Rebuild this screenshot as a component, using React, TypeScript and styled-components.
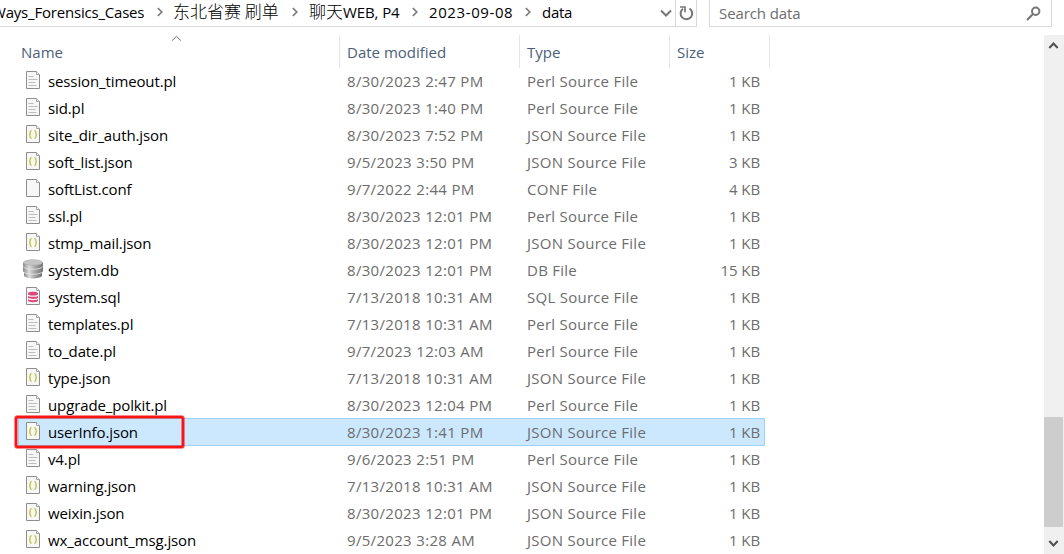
import React from "react";
import styled, { createGlobalStyle } from "styled-components";

const Global = createGlobalStyle`
  *, *::before { box-sizing: border-box; }
  body {
    margin: 0;
    background: #fff;
    overflow: hidden;
    font-family: "Open Sans", "Noto Sans", "Noto Sans CJK SC", sans-serif;
    font-size: 15px;
    color: #000;
  }
`;

const Window = styled.div`
  width: 1064px;
  height: 554px;
  display: flex;
  flex-direction: column;
  overflow: hidden;
  white-space: nowrap;
`;

const TopBar = styled.div`
  height: 27px;
  display: flex;
  flex: none;
`;

const AddressBar = styled.div`
  width: 697px;
  display: flex;
  border-right: 1px solid #d9d9d9;
  border-bottom: 1px solid #d9d9d9;
`;

const Crumbs = styled.div`
  width: 656px;
  display: flex;
  align-items: center;
`;

const Crumb = styled.span<{ $w: number; $track?: number; $shift?: number }>`
  width: ${(p) => p.$w}px;
  margin-left: ${(p) => p.$shift ?? 0}px;
  letter-spacing: ${(p) => p.$track ?? 0}px;
  height: 26px;
  line-height: 25px;
  flex: none;
`;

const Han = styled.span`
  font-family: "Noto Sans CJK SC", sans-serif;
  font-size: 17px;
  font-weight: 300;
  line-height: 1;
  letter-spacing: 0;
`;

const Separator = styled.svg`
  width: 8px;
  height: 10px;
  flex: none;
  margin-right: 12px;
  margin-top: -2px;
`;

const DropButton = styled.div`
  width: 19px;
  height: 26px;
  display: flex;
  align-items: center;
  justify-content: center;
`;

const RefreshButton = styled.div`
  width: 21px;
  height: 26px;
  border-left: 1px solid #d9d9d9;
  display: flex;
  align-items: center;
  justify-content: center;
`;

const SearchBox = styled.div`
  width: 343px;
  margin-left: 12px;
  padding: 0 10px 0 9px;
  border: 1px solid #d9d9d9;
  border-top: 0;
  display: flex;
  align-items: center;
  justify-content: space-between;
  color: #6d6d6d;
  line-height: 26px;
  letter-spacing: -0.1px;
`;

const Main = styled.div`
  display: flex;
  flex: 1;
  padding-top: 8px;
  min-height: 0;
`;

const List = styled.div`
  width: 1044px;
`;

const Header = styled.div`
  display: flex;
  height: 33px;
  color: #4c607a;
`;

const HeaderCell = styled.div<{ $w: number; $pad: number }>`
  position: relative;
  width: ${(p) => p.$w}px;
  padding-left: ${(p) => p.$pad}px;
  border-right: 1px solid #e5e5e5;
  line-height: 35px;
`;

const SortMark = styled.svg`
  position: absolute;
  left: 171px;
  top: 0;
`;

const Row = styled.div<{ $selected?: boolean }>`
  position: relative;
  display: flex;
  height: 27px;
  line-height: 27px;
  ${(p) =>
    p.$selected &&
    `&::before {
      content: "";
      position: absolute;
      z-index: -1;
      left: 18px;
      top: -1px;
      width: 747px;
      height: 28px;
      background: #cce8ff;
      border: 1px solid #99d1ff;
    }`}
`;

const NameCell = styled.div`
  width: 347px;
  padding-left: 23px;
  display: flex;
`;

const IconSlot = styled.div`
  width: 25px;
  height: 24px;
  display: flex;
  align-items: center;
`;

const FileName = styled.span`
  letter-spacing: -0.12px;
`;

const DateCell = styled.div`
  width: 180px;
  color: #6d6d6d;
  letter-spacing: 0.32px;
`;

const TypeCell = styled.div`
  width: 133px;
  color: #6d6d6d;
  letter-spacing: 0.26px;
`;

const SizeCell = styled.div`
  width: 100px;
  color: #6d6d6d;
  text-align: right;
  letter-spacing: -0.1px;
`;

const Highlight = styled.div`
  position: absolute;
  left: 15px;
  top: -3px;
  width: 169px;
  height: 32px;
  border: 2px solid #fb1414;
  border-radius: 2px;
  box-shadow: 0 0 0 0.5px #fb1414, inset 0 0 0 0.5px #fb1414;
`;

const ScrollBar = styled.div`
  width: 20px;
  background: #f0f0f0;
  display: flex;
  flex-direction: column;
`;

const ScrollArrow = styled.svg`
  width: 20px;
  height: 20px;
  flex: none;
`;

const ScrollThumb = styled.div`
  width: 19px;
  height: 110px;
  margin: 362px 0 auto;
  background: #cdcdcd;
  flex: none;
`;

type Kind = "text" | "json" | "blank" | "db" | "sql";

function FileIcon({ kind }: { kind: Kind }) {
  if (kind === "db") {
    return (
      <svg width="20" height="20" viewBox="0 0 20 20">
        <defs>
          <linearGradient id="metal">
            <stop offset="0" stopColor="#8a8a8a" />
            <stop offset=".3" stopColor="#dcdcdc" />
            <stop offset=".6" stopColor="#a6a6a6" />
            <stop offset="1" stopColor="#737373" />
          </linearGradient>
        </defs>
        <path d="M1 13v4c2 3.300 16 3.300 18 0v-4z" fill="url(#metal)" />
        <path d="M0 8v4.500c2 3.300 18 3.300 20 0V8z" fill="url(#metal)" />
        <path d="M.5 12.800c2 3.300 17 3.300 19 0" fill="none" stroke="#e4e4e4" strokeWidth=".8" />
        <path d="M0 3.500v4c2 3.300 18 3.300 20 0v-4z" fill="url(#metal)" />
        <path d="M.5 7.800c2 3.300 17 3.300 19 0" fill="none" stroke="#e4e4e4" strokeWidth=".8" />
        <ellipse cx="10" cy="3.500" rx="9.600" ry="2.800" fill="#c4c4c4" stroke="#aaa" strokeWidth=".6" />
      </svg>
    );
  }
  return (
    <svg width="20" height="20" viewBox="0 0 20 20">
      <path d="M3.500 1.500h10l3 3v14h-13z" fill="#f6f7f6" stroke="#8e8e8e" />
      <path d="M13.500 1.500v3h3" fill="#fff" stroke="#9c9c9c" strokeWidth=".9" />
      {kind === "text" && (
        <path d="M5.500 6.500h5M5.500 9.500h9M5.500 12.500h7M5.500 15.500h8" stroke="#bdbdbd" />
      )}
      {kind === "json" && (
        <path
          d="M8.700 6.700c-1.500 0-1.500.5-1.500 2 0 1.300-.2 1.800-1.200 1.800 1 0 1.200.5 1.200 1.800 0 1.500 0 2 1.500 2M11.300 6.700c1.500 0 1.500.5 1.500 2 0 1.300.2 1.800 1.200 1.800-1 0-1.200.5-1.200 1.800 0 1.500 0 2-1.500 2"
          fill="none"
          stroke="#c6c84f"
          strokeWidth="1.500"
        />
      )}
      {kind === "sql" && (
        <g fill="#e0457b">
          <path d="M5 7.300c0-2 10-2 10 0v1c0 1.600-10 1.600-10 0z" />
          <path d="M5 9.900c2 1.200 8 1.200 10 0v1.800c0 1.600-10 1.600-10 0z" />
          <path d="M5 13.300c2 1.200 8 1.200 10 0v1.500c0 1.900-10 1.900-10 0z" />
        </g>
      )}
    </svg>
  );
}

type Entry = [name: string, date: string, type: string, icon: Kind, size: string];

const files: Entry[] = [
  ["session_timeout.pl", "8/30/2023 2:47 PM", "Perl Source File", "text", "1 KB"],
  ["sid.pl", "8/30/2023 1:40 PM", "Perl Source File", "text", "1 KB"],
  ["site_dir_auth.json", "8/30/2023 7:52 PM", "JSON Source File", "json", "1 KB"],
  ["soft_list.json", "9/5/2023 3:50 PM", "JSON Source File", "json", "3 KB"],
  ["softList.conf", "9/7/2022 2:44 PM", "CONF File", "blank", "4 KB"],
  ["ssl.pl", "8/30/2023 12:01 PM", "Perl Source File", "text", "1 KB"],
  ["stmp_mail.json", "8/30/2023 12:01 PM", "JSON Source File", "json", "1 KB"],
  ["system.db", "8/30/2023 12:01 PM", "DB File", "db", "15 KB"],
  ["system.sql", "7/13/2018 10:31 AM", "SQL Source File", "sql", "1 KB"],
  ["templates.pl", "7/13/2018 10:31 AM", "Perl Source File", "text", "1 KB"],
  ["to_date.pl", "9/7/2023 12:03 AM", "Perl Source File", "text", "1 KB"],
  ["type.json", "7/13/2018 10:31 AM", "JSON Source File", "json", "1 KB"],
  ["upgrade_polkit.pl", "8/30/2023 12:04 PM", "Perl Source File", "text", "1 KB"],
  ["userInfo.json", "8/30/2023 1:41 PM", "JSON Source File", "json", "1 KB"],
  ["v4.pl", "9/6/2023 2:51 PM", "Perl Source File", "text", "1 KB"],
  ["warning.json", "7/13/2018 10:31 AM", "JSON Source File", "json", "1 KB"],
  ["weixin.json", "8/30/2023 12:01 PM", "JSON Source File", "json", "1 KB"],
  ["wx_account_msg.json", "9/5/2023 3:28 AM", "JSON Source File", "json", "1 KB"],
];

const Chevron = () => (
  <Separator viewBox="0 0 8 10">
    <path d="M1.800 1l4 4-4 4" fill="none" stroke="#7a7a7a" strokeWidth="1.700" />
  </Separator>
);

export default function App() {
  return (
    <Window>
      <Global />
      <TopBar>
        <AddressBar>
          <Crumbs>
            <Crumb $shift={-8} $w={164} $track={-0.2}>Ways_Forensics_Cases</Crumb>
            <Chevron />
            <Crumb $w={118} $shift={-3}><Han>东北省赛 刷单</Han></Crumb>
            <Chevron />
            <Crumb $w={102} $shift={-2} $track={-0.1}><Han>聊天</Han>WEB, P4</Crumb>
            <Chevron />
            <Crumb $w={95} $shift={-2} $track={0.6}>2023-09-08</Crumb>
            <Chevron />
            <Crumb $w={40} $shift={-2} $track={-0.3}>data</Crumb>
          </Crumbs>
          <DropButton>
            <svg width="12" height="8" viewBox="0 0 12 8">
              <path d="M1 1.500l5 5 5-5" fill="none" stroke="#767676" strokeWidth="2" />
            </svg>
          </DropButton>
          <RefreshButton>
            <svg width="16" height="16" viewBox="0 0 16 16">
              <path d="M11.500 3.500a5.800 5.800 0 1 1-6.500.2" fill="none" stroke="#767676" strokeWidth="2" />
              <path d="M2 2h5v5.200" fill="none" stroke="#767676" strokeWidth="1.700" />
            </svg>
          </RefreshButton>
        </AddressBar>
        <SearchBox>
          Search data
          <svg width="15" height="15" viewBox="0 0 15 15">
            <circle cx="9.700" cy="5.200" r="3.700" fill="none" stroke="#767676" strokeWidth="2" />
            <path d="M7 8l-6 6" stroke="#767676" strokeWidth="2.200" />
          </svg>
        </SearchBox>
      </TopBar>
      <Main>
        <List>
          <Header>
            <HeaderCell $w={340} $pad={21}>
              Name
              <SortMark width="11" height="7" viewBox="0 0 11 7">
                <path d="M1 5.700l4.500-4.400L10 5.700" fill="none" stroke="#6b6b6b" />
              </SortMark>
            </HeaderCell>
            <HeaderCell $w={180} $pad={7}>Date modified</HeaderCell>
            <HeaderCell $w={150} $pad={7}>Type</HeaderCell>
            <HeaderCell $w={100} $pad={7}>Size</HeaderCell>
          </Header>
          {files.map(([name, date, type, icon, size]) => {
            const selected = name === "userInfo.json";
            return (
              <Row key={name} $selected={selected}>
                <NameCell>
                  <IconSlot>
                    <FileIcon kind={icon} />
                  </IconSlot>
                  <FileName>{name}</FileName>
                </NameCell>
                <DateCell>{date}</DateCell>
                <TypeCell>{type}</TypeCell>
                <SizeCell>{size}</SizeCell>
                {selected && <Highlight />}
              </Row>
            );
          })}
        </List>
        <ScrollBar>
          <ScrollArrow viewBox="0 0 20 20">
            <path d="M5.300 13l4.200-4.500L13.700 13" fill="none" stroke="#505050" strokeWidth="2" />
          </ScrollArrow>
          <ScrollThumb />
          <ScrollArrow viewBox="0 0 20 20">
            <path d="M5.300 7l4.200 4.500L13.700 7" fill="none" stroke="#505050" strokeWidth="2" />
          </ScrollArrow>
        </ScrollBar>
      </Main>
    </Window>
  );
}
